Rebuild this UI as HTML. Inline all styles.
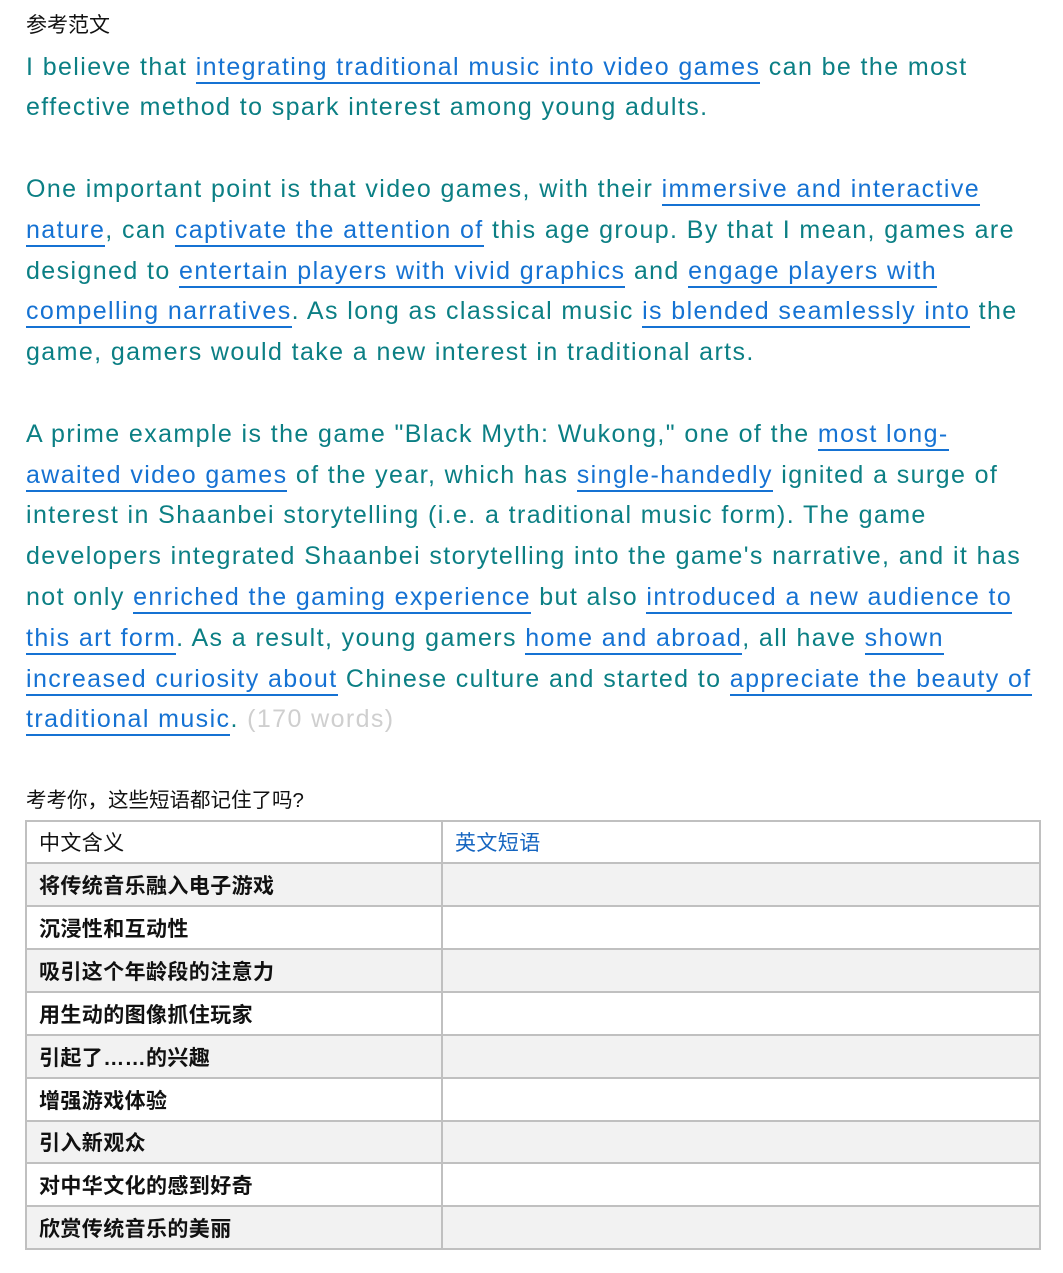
<!DOCTYPE html>
<html><head><meta charset="utf-8"><style>
body{margin:0;width:1063px;height:1273px;background:#fff;position:relative;overflow:hidden;font-family:"Liberation Sans","Noto Sans CJK SC",sans-serif}
.l{position:absolute;left:26px;height:41px;line-height:41px;font-size:25px;letter-spacing:1.4px;color:#0b7f84;white-space:nowrap;margin-top:1px}
.u{color:#1572d3;border-bottom:2px solid #1572d3;padding-bottom:1px}
.g{color:#cfcfcf}
.h{position:absolute;left:26px;font-size:21px;color:#111;line-height:26px;white-space:nowrap}
.r{position:absolute;left:25px;width:1016px;box-sizing:border-box;border:2px solid #c0c0c0;border-top:none;display:flex}
.r div{height:100%;display:flex;align-items:center;font-size:21px;letter-spacing:0.4px;font-weight:bold;color:#111}
.r .a{width:416px;box-sizing:border-box;padding-left:12px;border-right:2px solid #c0c0c0}
.r .b{flex:1;padding-left:12px}
.gray{background:#f2f2f2}
</style></head><body>
<div class="h" style="top:13px">参考范文</div>
<div class="l" style="top:46px">I believe that <span class="u">integrating traditional music into video games</span> can be the most</div>
<div class="l" style="top:86px">effective method to spark interest among young adults.</div>
<div class="l" style="top:168px">One important point is that video games, with their <span class="u">immersive and interactive</span></div>
<div class="l" style="top:209px"><span class="u">nature</span>, can <span class="u">captivate the attention of</span> this age group. By that I mean, games are</div>
<div class="l" style="top:250px">designed to <span class="u">entertain players with vivid graphics</span> and <span class="u">engage players with</span></div>
<div class="l" style="top:290px"><span class="u">compelling narratives</span>. As long as classical music <span class="u">is blended seamlessly into</span> the</div>
<div class="l" style="top:331px">game, gamers would take a new interest in traditional arts.</div>
<div class="l" style="top:413px">A prime example is the game "Black Myth: Wukong," one of the <span class="u">most long-</span></div>
<div class="l" style="top:454px"><span class="u">awaited video games</span> of the year, which has <span class="u">single-handedly</span> ignited a surge of</div>
<div class="l" style="top:494px">interest in Shaanbei storytelling (i.e. a traditional music form). The game</div>
<div class="l" style="top:535px">developers integrated Shaanbei storytelling into the game's narrative, and it has</div>
<div class="l" style="top:576px">not only <span class="u">enriched the gaming experience</span> but also <span class="u">introduced a new audience to</span></div>
<div class="l" style="top:617px"><span class="u">this art form</span>. As a result, young gamers <span class="u">home and abroad</span>, all have <span class="u">shown</span></div>
<div class="l" style="top:658px"><span class="u">increased curiosity about</span> Chinese culture and started to <span class="u">appreciate the beauty of</span></div>
<div class="l" style="top:698px"><span class="u">traditional music</span>. <span class="g">(170 words)</span></div>
<div class="h" style="top:788px;font-size:20.5px">考考你，这些短语都记住了吗?</div>
<div class="r" style="top:820px;height:44px;border-top:2px solid #c0c0c0"><div class="a" style="font-weight:normal">中文含义</div><div class="b" style="font-weight:normal;color:#1565c0">英文短语</div></div>
<div class="r gray" style="top:864px;height:43px"><div class="a">将传统音乐融入电子游戏</div><div class="b"></div></div>
<div class="r" style="top:907px;height:43px"><div class="a">沉浸性和互动性</div><div class="b"></div></div>
<div class="r gray" style="top:950px;height:43px"><div class="a">吸引这个年龄段的注意力</div><div class="b"></div></div>
<div class="r" style="top:993px;height:43px"><div class="a">用生动的图像抓住玩家</div><div class="b"></div></div>
<div class="r gray" style="top:1036px;height:43px"><div class="a">引起了……的兴趣</div><div class="b"></div></div>
<div class="r" style="top:1079px;height:43px"><div class="a">增强游戏体验</div><div class="b"></div></div>
<div class="r gray" style="top:1122px;height:42px"><div class="a">引入新观众</div><div class="b"></div></div>
<div class="r" style="top:1164px;height:43px"><div class="a">对中华文化的感到好奇</div><div class="b"></div></div>
<div class="r gray" style="top:1207px;height:43px"><div class="a">欣赏传统音乐的美丽</div><div class="b"></div></div>
</body></html>
